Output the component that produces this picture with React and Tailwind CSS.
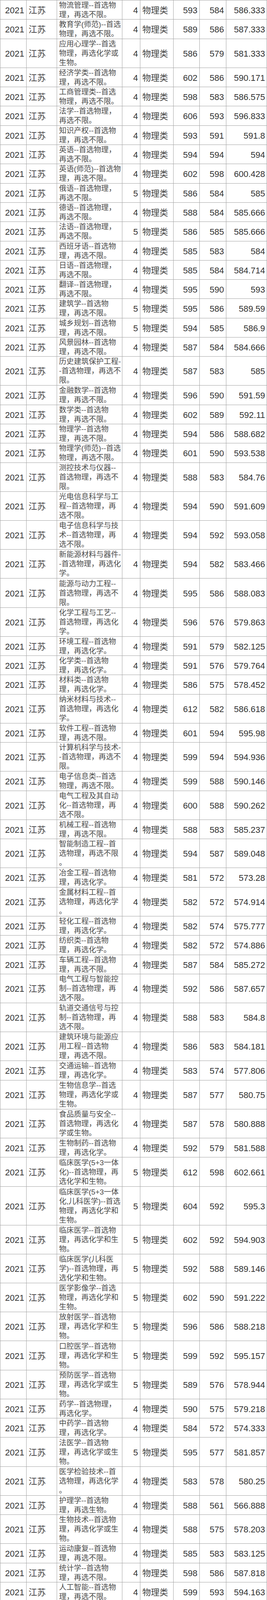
const rows = [
  ["物流管理--首选物|理，再选不限。", 4, "物理类", 593, 584, "586.333"],
  ["教育学(师范)--首选|物理，再选不限。", 4, "物理类", 589, 586, "587.333"],
  ["应用心理学--首选|物理，再选化学或|生物。", 4, "物理类", 586, 579, "581.333"],
  ["经济学类--首选物|理，再选不限。", 4, "物理类", 602, 586, "590.171"],
  ["工商管理类--首选|物理，再选不限。", 4, "物理类", 598, 583, "586.575"],
  ["法学--首选物理，|再选不限。", 4, "物理类", 606, 593, "596.833"],
  ["知识产权--首选物|理，再选不限。", 4, "物理类", 593, 591, "591.8"],
  ["英语--首选物理，|再选不限。", 4, "物理类", 594, 594, "594"],
  ["英语(师范)--首选物|理，再选不限。", 4, "物理类", 602, 598, "600.428"],
  ["俄语--首选物理，|再选不限。", 5, "物理类", 586, 584, "585"],
  ["德语--首选物理，|再选不限。", 4, "物理类", 588, 584, "585.666"],
  ["法语--首选物理，|再选不限。", 5, "物理类", 586, 585, "585.666"],
  ["西班牙语--首选物|理，再选不限。", 4, "物理类", 585, 583, "584"],
  ["日语--首选物理，|再选不限。", 4, "物理类", 585, 584, "584.714"],
  ["翻译--首选物理，|再选不限。", 4, "物理类", 595, 590, "593"],
  ["建筑学--首选物|理，再选不限。", 5, "物理类", 595, 586, "589.59"],
  ["城乡规划--首选物|理，再选不限。", 5, "物理类", 594, 585, "586.9"],
  ["风景园林--首选物|理，再选不限。", 4, "物理类", 587, 584, "584.666"],
  ["历史建筑保护工程-|-首选物理，再选不|限。", 4, "物理类", 587, 583, "585"],
  ["金融数学--首选物|理，再选不限。", 4, "物理类", 596, 590, "591.59"],
  ["数学类--首选物|理，再选不限。", 4, "物理类", 602, 589, "592.11"],
  ["物理学--首选物|理，再选不限。", 4, "物理类", 594, 586, "588.682"],
  ["物理学(师范)--首选|物理，再选不限。", 4, "物理类", 601, 590, "593.538"],
  ["测控技术与仪器--|首选物理，再选不|限。", 4, "物理类", 588, 583, "584.76"],
  ["光电信息科学与工|程--首选物理，再|选不限。", 4, "物理类", 594, 590, "591.609"],
  ["电子信息科学与技|术--首选物理，再|选不限。", 4, "物理类", 594, 592, "593.058"],
  ["新能源材料与器件-|-首选物理，再选化|学。", 4, "物理类", 594, 582, "583.466"],
  ["能源与动力工程--|首选物理，再选不|限。", 4, "物理类", 595, 586, "588.083"],
  ["化学工程与工艺--|首选物理，再选化|学。", 4, "物理类", 596, 576, "579.863"],
  ["环境工程--首选物|理，再选化学。", 4, "物理类", 591, 579, "582.125"],
  ["化学类--首选物|理，再选化学。", 4, "物理类", 591, 576, "579.764"],
  ["材料类--首选物|理，再选化学。", 4, "物理类", 586, 575, "578.452"],
  ["纳米材料与技术--|首选物理，再选化|学。", 4, "物理类", 612, 582, "586.618"],
  ["软件工程--首选物|理，再选不限。", 4, "物理类", 601, 594, "595.98"],
  ["计算机科学与技术-|-首选物理，再选不|限。", 4, "物理类", 599, 594, "594.936"],
  ["电子信息类--首选|物理，再选不限。", 4, "物理类", 599, 588, "590.146"],
  ["电气工程及其自动|化--首选物理，再|选不限。", 4, "物理类", 600, 588, "590.262"],
  ["机械工程--首选物|理，再选不限。", 4, "物理类", 588, 583, "585.237"],
  ["智能制造工程--首|选物理，再选不限|。", 4, "物理类", 594, 587, "589.048"],
  ["冶金工程--首选物|理，再选化学。", 4, "物理类", 581, 572, "573.28"],
  ["金属材料工程--首|选物理，再选化学|。", 4, "物理类", 582, 572, "574.914"],
  ["轻化工程--首选物|理，再选化学。", 4, "物理类", 582, 574, "575.777"],
  ["纺织类--首选物|理，再选化学。", 4, "物理类", 582, 572, "574.886"],
  ["车辆工程--首选物|理，再选不限。", 4, "物理类", 587, 584, "585.272"],
  ["电气工程与智能控|制--首选物理，再|选不限。", 4, "物理类", 592, 586, "587.657"],
  ["轨道交通信号与控|制--首选物理，再|选不限。", 4, "物理类", 588, 583, "584.8"],
  ["建筑环境与能源应|用工程--首选物|理，再选不限。", 4, "物理类", 586, 583, "584.181"],
  ["交通运输--首选物|理，再选化学。", 4, "物理类", 583, 574, "577.806"],
  ["生物信息学--首选|物理，再选化学或|生物。", 4, "物理类", 587, 577, "580.75"],
  ["食品质量与安全--|首选物理，再选化|学或生物。", 4, "物理类", 587, 578, "580.888"],
  ["生物制药--首选物|理，再选化学。", 4, "物理类", 592, 579, "581.588"],
  ["临床医学(5+3一体|化)--首选物理，再|选化学和生物。", 5, "物理类", 612, 598, "602.661"],
  ["临床医学(5+3一体|化,儿科医学)--首选|物理，再选化学和|生物。", 5, "物理类", 604, 592, "595.3"],
  ["临床医学--首选物|理，再选化学和生|物。", 5, "物理类", 602, 592, "594.903"],
  ["临床医学(儿科医|学)--首选物理，再|选化学和生物。", 5, "物理类", 592, 588, "589.146"],
  ["医学影像学--首选|物理，再选化学和|生物。", 5, "物理类", 602, 590, "591.222"],
  ["放射医学--首选物|理，再选化学和生|物。", 5, "物理类", 596, 586, "588.218"],
  ["口腔医学--首选物|理，再选化学和生|物。", 5, "物理类", 599, 592, "595.157"],
  ["预防医学--首选物|理，再选化学或生|物。", 5, "物理类", 589, 576, "578.944"],
  ["药学--首选物理，|再选化学。", 4, "物理类", 590, 575, "579.218"],
  ["中药学--首选物|理，再选化学。", 4, "物理类", 584, 572, "574.333"],
  ["法医学--首选物|理，再选化学或生|物。", 5, "物理类", 595, 577, "581.857"],
  ["医学检验技术--首|选物理，再选化学|。", 4, "物理类", 583, 578, "580.25"],
  ["护理学--首选物|理，再选生物。", 4, "物理类", 588, 561, "566.888"],
  ["生物技术--首选物|理，再选化学或生|物。", 4, "物理类", 588, 575, "578.203"],
  ["运动康复--首选物|理，再选不限。", 4, "物理类", 585, 583, "583.125"],
  ["统计学--首选物|理，再选不限。", 4, "物理类", 598, 586, "587.818"],
  ["人工智能--首选物|理，再选不限。", 4, "物理类", 599, 593, "594.163"],
  ["集成电路设计与集|成系统--首选物|理，再选不限。", 4, "物理类", 599, 587, "589.618"],
  ["机械电子工程--首|选物理，再选不限|。", 4, "物理类", 593, 583, "586.09"],
  ["物流管理(中外合作|办学)--首选历史，|再选不限。", 4, "历史类", 582, 572, "573.89"],
  ["金融学(中外合作办|学)--首选历史，再|选不限。", 5, "历史类", 585, 575, "578.354"],
  ["物流管理(中外合作|办学)--首选物理，|再选不限。", 4, "物理类", 564, 558, "560.875"],
  ["金融学(中外合作办|学)--首选物理，再|选不限。", 5, "物理类", 583, 564, "569.957"],
  ["新能源材料与器件|(中外合作办学)--首|选物理，再选化学|。", 5, "物理类", 565, 539, "546.578"],
  ["纺织工程(中外合作|办学)--首选物理，|再选化学。", 4, "物理类", 564, 527, "533.015"],
];

// measured row pitch per number of wrapped lines
const pitch = { 2: 49.3, 3: 74.2, 4: 99 };

let acc = 0;
let prev = 0;
const heights = rows.map(([major]) => {
  acc += pitch[major.split("|").length];
  const y = Math.round(acc);
  const h = y - prev;
  prev = y;
  return h;
});

const cell = "flex items-center overflow-hidden border-r border-[#a3a3a3] min-h-0";
const big = "text-[22px] leading-[22px] text-[#333] pt-[3px]";

function Row({ data, h, last }) {
  const [major, n, kind, hi, lo, avg] = data;
  const lines = major.split("|");
  return (
    <div
      className={`grid grid-cols-[67px_78px_167px_46px_85px_67px_68px_104px] grid-rows-1 overflow-hidden bg-white ${
        last ? "border-b-2 border-b-[#8a8a8a]" : "border-b border-b-[#a3a3a3]"
      }`}
      style={{ height: h }}
    >
      <div className={`${cell} ${big} justify-end pr-[5px]`}>2021</div>
      <div className={`${cell} ${big} pl-[5px] text-[#444]`}>江苏</div>
      <div className={`${cell} flex-col items-start justify-center pl-[5px] pt-[1px] text-[19px] leading-[19px] text-[#4a4a4a] whitespace-nowrap`}>
        {lines.map((line, j) => (
          <div key={j} className="h-[24px] shrink-0 pt-[2px]">
            {line}
          </div>
        ))}
      </div>
      <div className={`${cell} ${big} justify-end pr-[5px]`}>{n}</div>
      <div className={`${cell} ${big} pl-[5px] text-[#444]`}>{kind}</div>
      <div className={`${cell} ${big} justify-end pr-[5px]`}>{hi}</div>
      <div className={`${cell} ${big} justify-end pr-[5px]`}>{lo}</div>
      <div className={`${cell} ${big} justify-end pr-[4px]`}>{avg}</div>
    </div>
  );
}

export default function App() {
  return (
    <div className="bg-white w-[683px] font-['Liberation_Sans','Noto_Sans_CJK_SC',sans-serif]">
      <div className="w-[683px] border-l border-t border-[#a3a3a3]">
        {rows.map((r, i) => (
          <Row key={i} data={r} h={heights[i]} last={i === rows.length - 1} />
        ))}
      </div>
    </div>
  );
}
